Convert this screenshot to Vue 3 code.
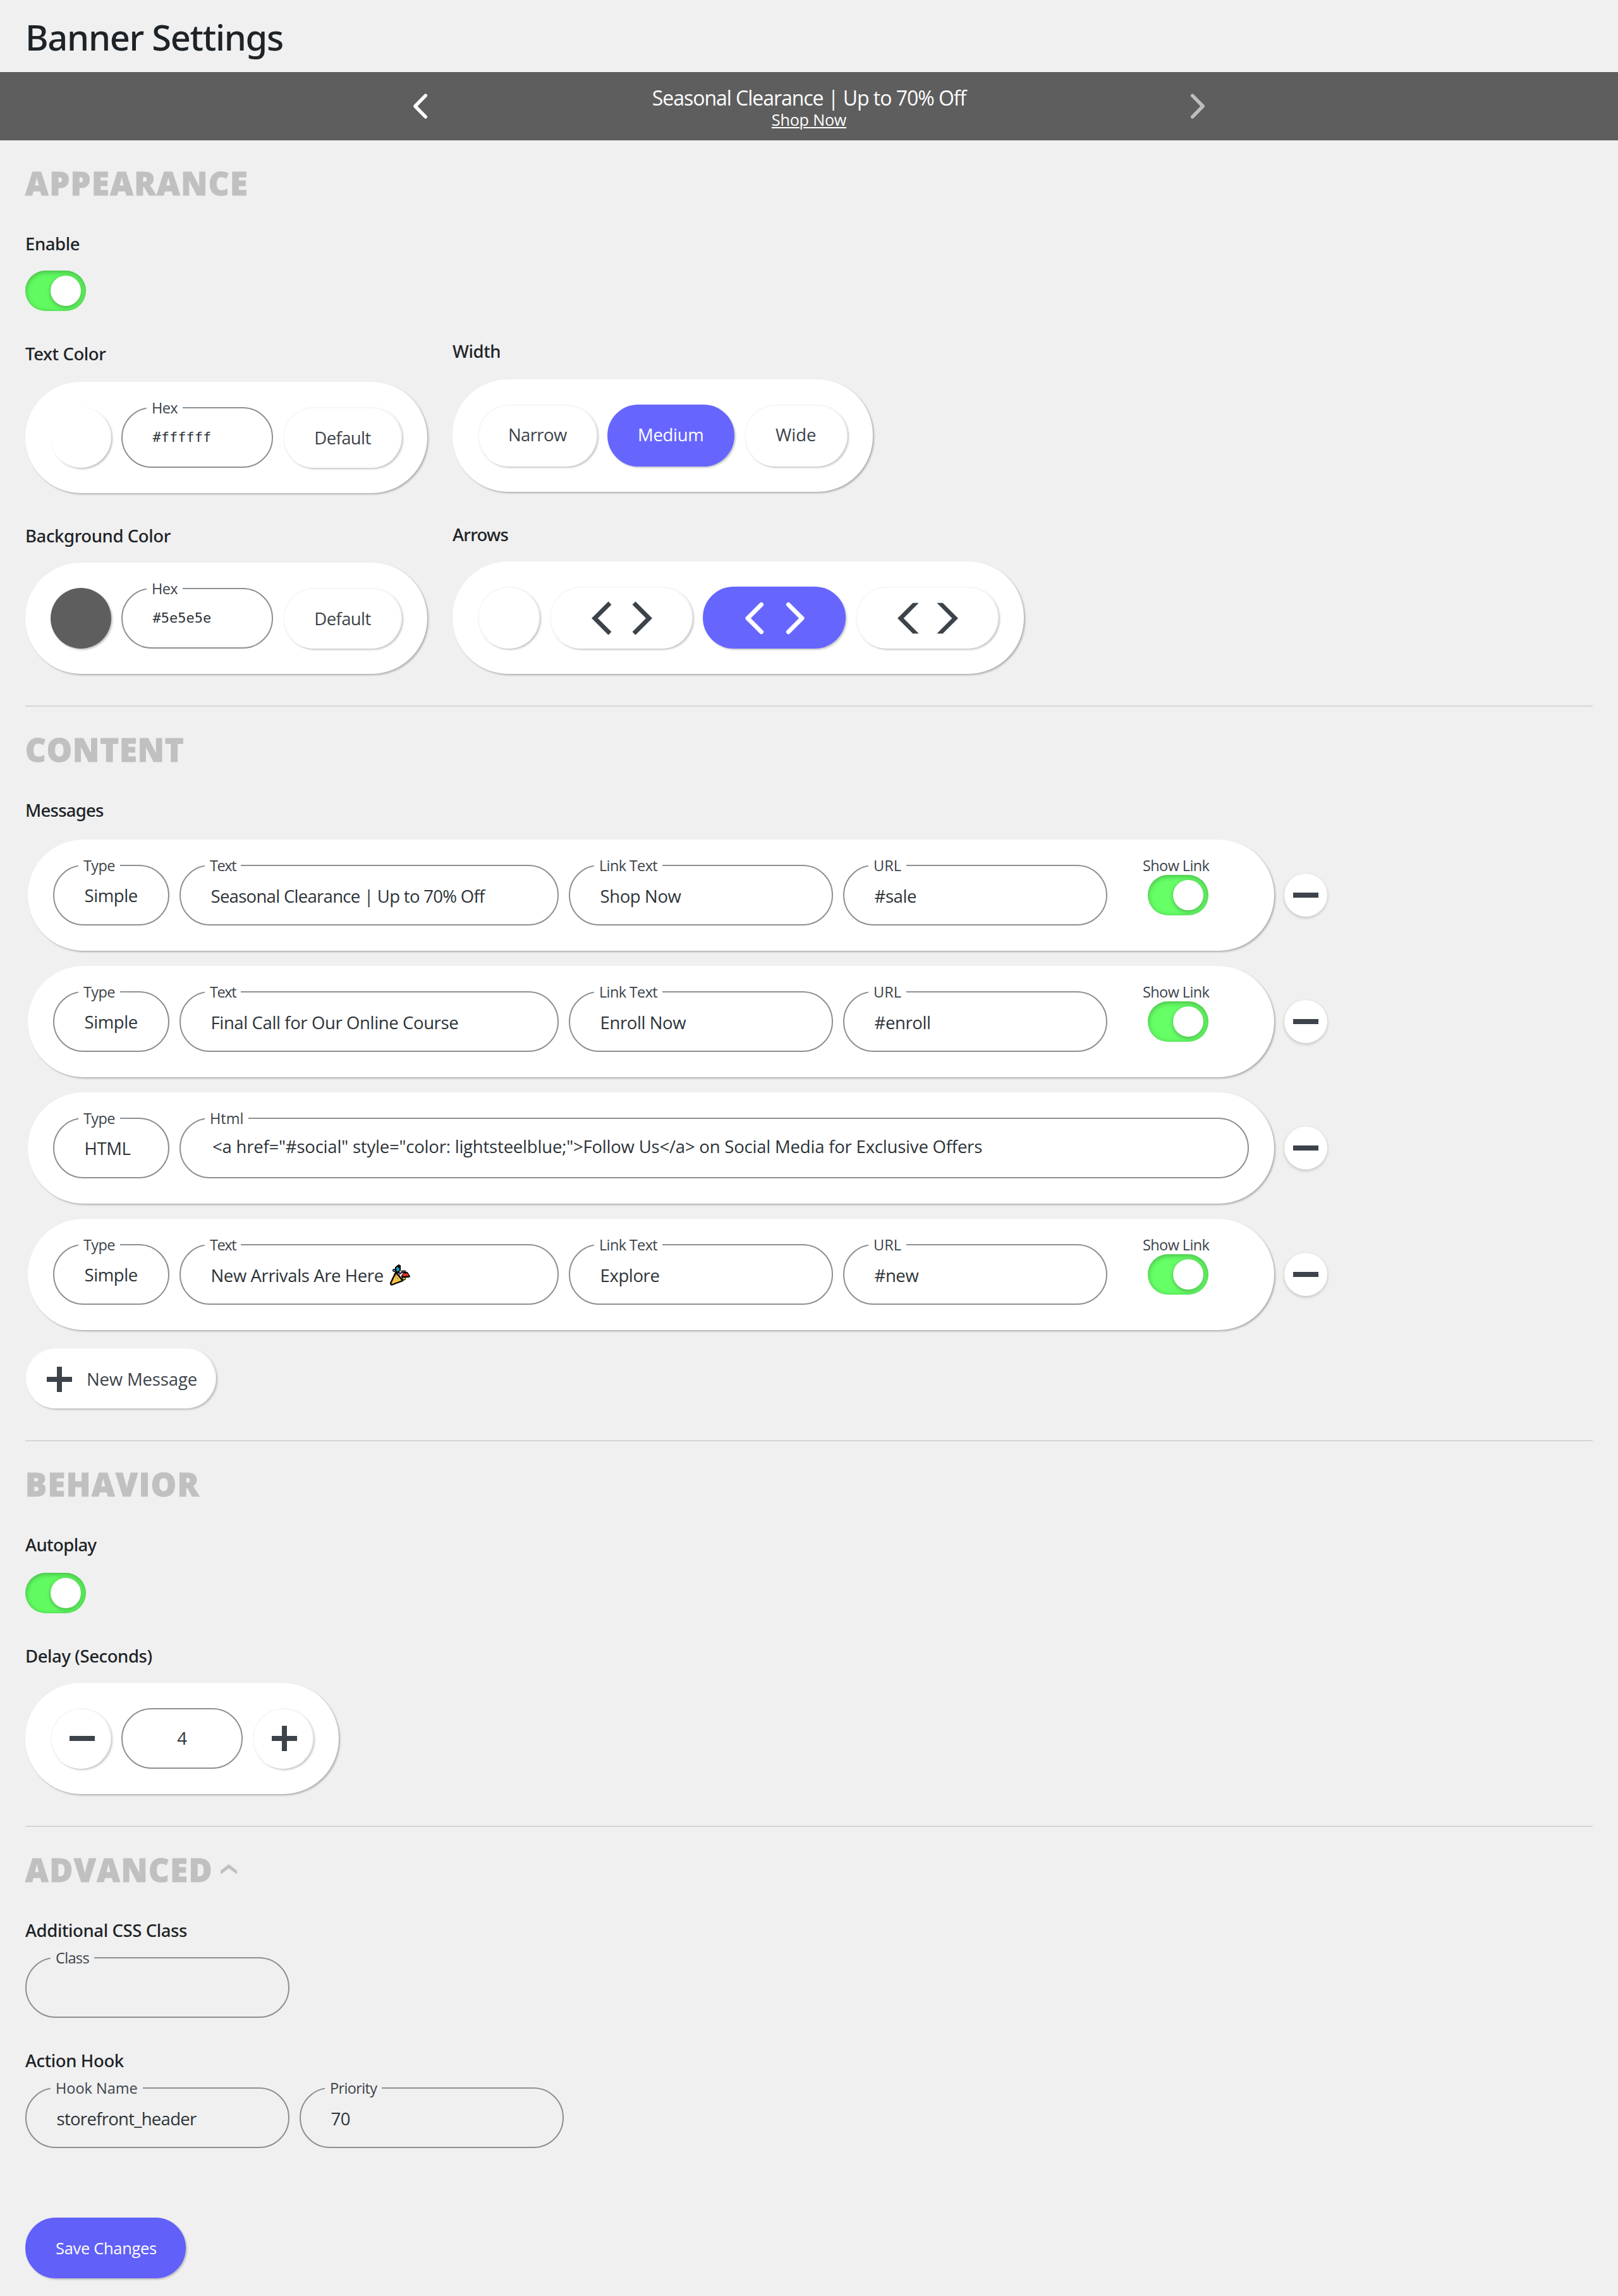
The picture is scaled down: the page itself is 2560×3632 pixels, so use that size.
<script setup>
import { ref } from 'vue'

const colors = ref([
  { label: 'Text Color', value: '#ffffff' },
  { label: 'Background Color', value: '#5e5e5e' },
])

const widths = ['Narrow', 'Medium', 'Wide']
const width = ref('Medium')

const arrowStyles = [
  { id: 'sharp', cap: 'butt', join: 'miter', reach: 24 },
  { id: 'round', cap: 'round', join: 'round', reach: 21.6 },
]
const arrow = ref('round')

const messages = ref([
  { type: 'Simple', text: 'Seasonal Clearance | Up to 70% Off', link: 'Shop Now', url: '#sale', dense: true },
  { type: 'Simple', text: 'Final Call for Our Online Course', link: 'Enroll Now', url: '#enroll' },
  {
    type: 'HTML',
    html: '<a href="#social" style="color: lightsteelblue;">Follow Us</a> on Social Media for Exclusive Offers',
  },
  { type: 'Simple', text: 'New Arrivals Are Here', popper: true, link: 'Explore', url: '#new' },
])

// Left and right chevron, each arm running `r` pixels diagonally from its apex
const chevrons = (r) => `M${r - 43} ${-r}L-43 0L${r - 43} ${r}M${43 - r} ${-r}L43 0L${43 - r} ${r}`
</script>

<template>
  <div class="page">
    <h1 class="title">Banner Settings</h1>

    <div class="banner">
      <div class="banner-inner">
        <svg class="nav" viewBox="-11 -20 22 40"><path d="M8.35 -16.8L-8.2 0L8.35 16.8" /></svg>
        <div class="banner-copy">
          <div class="banner-text">Seasonal Clearance | Up to 70% Off</div>
          <a class="banner-link">Shop Now</a>
        </div>
        <svg class="nav dim" viewBox="-11 -20 22 40"><path d="M-8.35 -16.8L8.2 0L-8.35 16.8" /></svg>
      </div>
    </div>

    <main>
      <section>
        <h2>APPEARANCE</h2>
        <div class="label">Enable</div>
        <div class="toggle"><i></i></div>

        <div class="columns">
          <div class="col">
            <div v-for="c in colors" :key="c.label" class="group">
              <div class="label">{{ c.label }}</div>
              <div class="card">
                <div class="swatch" :style="{ background: c.value }"></div>
                <div class="field w-hex mono"><span class="legend">Hex</span>{{ c.value }}</div>
                <button class="btn w-default">Default</button>
              </div>
            </div>
          </div>
          <div class="col second">
            <div class="group">
              <div class="label">Width</div>
              <div class="card">
                <button
                  v-for="w in widths"
                  :key="w"
                  class="btn tall"
                  :class="['w-' + w.toLowerCase(), { active: w === width }]"
                >{{ w }}</button>
              </div>
            </div>
            <div class="group">
              <div class="label tight">Arrows</div>
              <div class="card">
                <button class="btn tall w-none"></button>
                <button
                  v-for="a in arrowStyles"
                  :key="a.id"
                  class="btn tall w-arrows"
                  :class="{ active: a.id === arrow }"
                >
                  <svg class="chev" viewBox="-48 -28 96 56">
                    <path :d="chevrons(a.reach)" :stroke-linecap="a.cap" :stroke-linejoin="a.join" />
                  </svg>
                </button>
                <button class="btn tall w-arrows">
                  <svg class="chev solid" viewBox="-48 -28 96 56">
                    <path d="M-48 0L-23.7 -24.3H-14.3L-38.3 0L-14.3 24.3H-23.7Z" />
                    <path d="M48 0L23.7 -24.3H14.3L38.3 0L14.3 24.3H23.7Z" />
                  </svg>
                </button>
              </div>
            </div>
          </div>
        </div>
      </section>

      <section>
        <h2 class="narrow">CONTENT</h2>
        <div class="label tight">Messages</div>
        <div class="messages">
          <div v-for="(m, i) in messages" :key="i" class="row">
            <div class="card message">
              <div class="field w-type"><span class="legend">Type</span>{{ m.type }}</div>
              <template v-if="m.type === 'Simple'">
                <div class="field low w-text" :class="{ dense: m.dense }">
                  <span class="legend tight">Text</span>{{ m.text }}
                  <svg v-if="m.popper" class="popper" viewBox="0 0 34 34">
                    <path d="M10 13L2 30Q2 33 5 32L21 26Q15 17 10 13Z" fill="#fdc23e" stroke="#000" stroke-width="2.4" stroke-linejoin="round" />
                    <path d="M10 5L15 1V5L17 2V10L13 13L10 10Z" fill="#1798be" stroke="#000" stroke-width="2" stroke-linejoin="round" />
                    <circle cx="7.5" cy="9.5" r="2" fill="#7a6fc4" stroke="#000" stroke-width="1.2" />
                    <path d="M15 15Q20 10 26 12" fill="none" stroke="#000" stroke-width="4" />
                    <path d="M15 15Q20 10 26 12" fill="none" stroke="#5b4a9c" stroke-width="1.8" />
                    <circle cx="17.5" cy="11.5" r="1.4" fill="#ffd84a" />
                    <circle cx="23" cy="22.5" r="2.3" fill="#f2d01d" stroke="#000" stroke-width="1.2" />
                    <path d="M20 18L24 13L28 13L32 19L30 20H20Z" fill="#a51208" stroke="#000" stroke-width="2" stroke-linejoin="round" />
                    <path d="M21 18L23.5 15L25 18L27.5 15L30 18" fill="none" stroke="#ff4326" stroke-width="1.5" />
                    <circle cx="10" cy="18" r="1.2" fill="#ff3a1d" />
                    <circle cx="13" cy="22" r="1.2" fill="#2cb7dc" />
                  </svg>
                </div>
                <div class="field low w-std"><span class="legend">Link Text</span>{{ m.link }}</div>
                <div class="field low w-std"><span class="legend flat">URL</span>{{ m.url }}</div>
                <div class="show">
                  <span class="show-label">Show Link</span>
                  <div class="toggle bright"><i></i></div>
                </div>
              </template>
              <div v-else class="field high w-html"><span class="legend flat">Html</span>{{ m.html }}</div>
            </div>
            <button class="remove"><i></i></button>
          </div>
        </div>
        <button class="btn new">
          <svg class="plus" viewBox="0 0 40 40"><path d="M16 0h8v16h16v8H24v16h-8V24H0v-8h16z" /></svg>
          New Message
        </button>
      </section>

      <section>
        <h2>BEHAVIOR</h2>
        <div class="label above-toggle">Autoplay</div>
        <div class="toggle"><i></i></div>
        <div class="label delay">Delay (Seconds)</div>
        <div class="card">
          <button class="btn round">
            <svg class="plus" viewBox="0 0 40 40"><path d="M0 16h40v8H0z" /></svg>
          </button>
          <div class="field number">4</div>
          <button class="btn round">
            <svg class="plus" viewBox="0 0 40 40"><path d="M16 0h8v16h16v8H24v16h-8V24H0v-8h16z" /></svg>
          </button>
        </div>
      </section>

      <section class="last">
        <h2>
          ADVANCED
          <svg class="caret" viewBox="0 0 26 16"><path d="M13 0L26 10V16L13 6.5L0 16V10Z" /></svg>
        </h2>
        <div class="label">Additional CSS Class</div>
        <div class="field w-std gray"><span class="legend">Class</span></div>
        <div class="label hook">Action Hook</div>
        <div class="pair">
          <div class="field low w-std gray dense"><span class="legend flat">Hook Name</span>storefront_header</div>
          <div class="field low w-std gray"><span class="legend">Priority</span>70</div>
        </div>
        <button class="btn active save">Save Changes</button>
      </section>
    </main>
  </div>
</template>

<style>
body {
  margin: 0;
  background: #f0f0f0;
}
</style>

<style scoped>
.page {
  width: 2560px;
  height: 3632px;
  overflow: hidden;
  background: #f0f0f0;
  font-family: 'Open Sans', 'Noto Sans', sans-serif;
  font-size: 27.5px;
  color: #2c3338;
}
.page * {
  box-sizing: border-box;
}
.title {
  margin: 0;
  padding-left: 40px;
  height: 114px;
  font: 500 56px/117px 'Noto Sans', sans-serif;
  letter-spacing: -1.29px;
  color: #1d2327;
}
.banner {
  height: 108px;
  background: #5e5e5e;
  color: #fff;
}
.banner-inner {
  display: flex;
  justify-content: space-between;
  width: 1252px;
  margin: 0 auto;
}
.nav {
  width: 22px;
  height: 40px;
  margin-top: 33.5px;
  overflow: visible;
  fill: none;
  stroke: #fff;
  stroke-width: 5.4;
  stroke-linecap: round;
  stroke-linejoin: round;
}
.dim {
  opacity: 0.6;
}
.banner-copy {
  padding-top: 20px;
  text-align: center;
}
.banner-text {
  font-size: 32px;
  line-height: 41px;
  letter-spacing: -1.03px;
}
.banner-link {
  display: block;
  font-size: 25.2px;
  line-height: 28px;
  letter-spacing: -0.21px;
  text-decoration: underline;
  text-decoration-thickness: 2px;
  text-underline-offset: 2px;
}
main {
  padding: 0 40px;
}
section {
  padding: 34px 0 50px;
  border-bottom: 2px solid #d6d6d6;
}
section.last {
  border: 0;
  padding-bottom: 0;
}
h2 {
  display: flex;
  align-items: center;
  margin: 0 0 42px;
  font-size: 50.5px;
  font-weight: 800;
  line-height: 68px;
  letter-spacing: 1.5px;
  color: #c0c0c0;
  -webkit-text-stroke: 1px #c0c0c0;
}
h2.narrow {
  letter-spacing: 1px;
}
.label {
  height: 40px;
  margin-bottom: 22px;
  font: 500 27.5px/40px 'Noto Sans', sans-serif;
  letter-spacing: -0.4px;
  color: #1d2327;
}
.label.tight {
  letter-spacing: -0.75px;
}
.toggle {
  width: 96px;
  height: 64px;
  padding: 8px;
  border-radius: 32px;
  background: #61fb61;
  box-shadow: inset 0 2px 8px rgba(0, 0, 0, 0.3);
}
.toggle.bright {
  background: #66ff66;
}
.toggle i {
  display: block;
  width: 48px;
  height: 48px;
  margin-left: 32px;
  border-radius: 50%;
  background: #fff;
  box-shadow: 0 2px 6px rgba(0, 0, 0, 0.3);
}
.columns {
  display: flex;
  gap: 40px;
  margin-top: 48px;
}
.group + .group {
  margin-top: 48px;
}
.group:first-child .label {
  margin-bottom: 24px;
}
.second {
  margin-top: -4px;
}
.card {
  display: flex;
  gap: 16px;
  width: fit-content;
  padding: 40px;
  border-radius: 88px;
  background: #fff;
  box-shadow: 2px 2px 3px rgba(0, 0, 0, 0.27);
}
.swatch {
  width: 96px;
  height: 96px;
  border-radius: 50%;
  box-shadow: 2px 2px 3px rgba(0, 0, 0, 0.24);
}
.field {
  position: relative;
  display: flex;
  align-items: center;
  height: 96px;
  padding-left: 47.5px;
  border: 2px solid #8c8f94;
  border-radius: 48px;
  letter-spacing: -0.38px;
  white-space: nowrap;
}
.field.low {
  padding-top: 3px;
}
.field.high {
  padding-bottom: 5px;
  padding-left: 50px;
  letter-spacing: -0.2px;
}
.field.dense {
  letter-spacing: -0.7px;
}
.legend {
  position: absolute;
  left: 38px;
  top: -17px;
  padding: 0 8px;
  background: #fff;
  font-size: 23.5px;
  line-height: 32px;
  letter-spacing: -0.65px;
  color: #3c434a;
}
.legend.flat {
  letter-spacing: 0;
}
.legend.tight {
  letter-spacing: -1.4px;
}
.gray .legend {
  background: #f0f0f0;
}
.mono {
  padding-bottom: 1px;
  font-family: 'DejaVu Sans Mono', monospace;
  font-size: 22px;
  letter-spacing: 0;
}
.mono .legend {
  font-family: 'Open Sans', sans-serif;
}
.w-hex {
  width: 240px;
}
.w-type {
  width: 184px;
}
.w-text {
  width: 600px;
}
.w-std {
  width: 418px;
}
.w-html {
  flex: 1;
}
.number {
  width: 192px;
  padding: 0 0 1px;
  justify-content: center;
}
.btn {
  display: flex;
  align-items: center;
  justify-content: center;
  height: 96px;
  padding: 0;
  border: 2px solid #f7f7f7;
  border-bottom-color: #fff;
  border-radius: 49px;
  background: #fff;
  box-shadow: 2px 2px 3px rgba(0, 0, 0, 0.22);
  font: inherit;
  letter-spacing: -0.6px;
  color: #3c434a;
  white-space: nowrap;
}
.btn.tall {
  height: 98px;
  padding-bottom: 3px;
}
.btn.active {
  border-color: #6666ff;
  background: #6666ff;
  color: #fff;
}
.w-default {
  width: 188px;
}
.w-narrow {
  width: 188.5px;
}
.w-medium {
  width: 201.5px;
  letter-spacing: -0.3px;
}
.w-wide {
  width: 162.5px;
  letter-spacing: 0;
}
.w-none {
  width: 98px;
}
.w-arrows {
  width: 226px;
}
.chev {
  width: 96px;
  height: 56px;
  margin: 5px 0 0 1px;
  overflow: visible;
  fill: none;
  stroke: currentColor;
  stroke-width: 7;
}
.chev.solid {
  fill: currentColor;
  stroke: none;
}
.messages {
  display: flex;
  flex-direction: column;
  gap: 24px;
  margin-top: 26px;
  padding-left: 4px;
}
.row {
  display: flex;
  align-items: center;
  gap: 16px;
}
.message {
  width: 1972px;
}
.popper {
  width: 34px;
  height: 34px;
  margin: -2px 0 0 9px;
}
.show {
  display: flex;
  flex-direction: column;
  width: 96px;
  margin: -15px 0 0 48px;
}
.show-label {
  height: 31px;
  margin-left: -8px;
  font-size: 23.5px;
  line-height: 32px;
  letter-spacing: -0.6px;
  white-space: nowrap;
  color: #3c434a;
}
.remove {
  display: flex;
  align-items: center;
  justify-content: center;
  width: 68px;
  height: 68px;
  padding: 0;
  border: 0;
  border-radius: 50%;
  background: #fff;
  box-shadow: 0 2px 5px rgba(0, 0, 0, 0.2);
}
.remove i {
  width: 40px;
  height: 8px;
  background: #3c434a;
}
.new {
  width: 302px;
  margin-top: 28px;
  padding: 3px 0 0 4px;
  gap: 23px;
  letter-spacing: -0.16px;
}
.plus {
  width: 40px;
  height: 40px;
  fill: #3c434a;
}
.round {
  width: 96px;
}
.round .plus {
  margin-left: 4px;
}
.label.above-toggle {
  margin-bottom: 24px;
  letter-spacing: -0.6px;
}
.delay,
.hook {
  margin-top: 48px;
}
.caret {
  width: 26px;
  height: 16px;
  margin: 0 0 3px 12px;
  fill: #c0c0c0;
}
.pair {
  display: flex;
  gap: 16px;
}
.save {
  width: 254px;
  margin-top: 110px;
  padding-left: 2px;
  font-size: 25.5px;
  letter-spacing: -0.32px;
}
.save.active {
  border-color: #6160f9;
  background: #6160f9;
}
</style>
